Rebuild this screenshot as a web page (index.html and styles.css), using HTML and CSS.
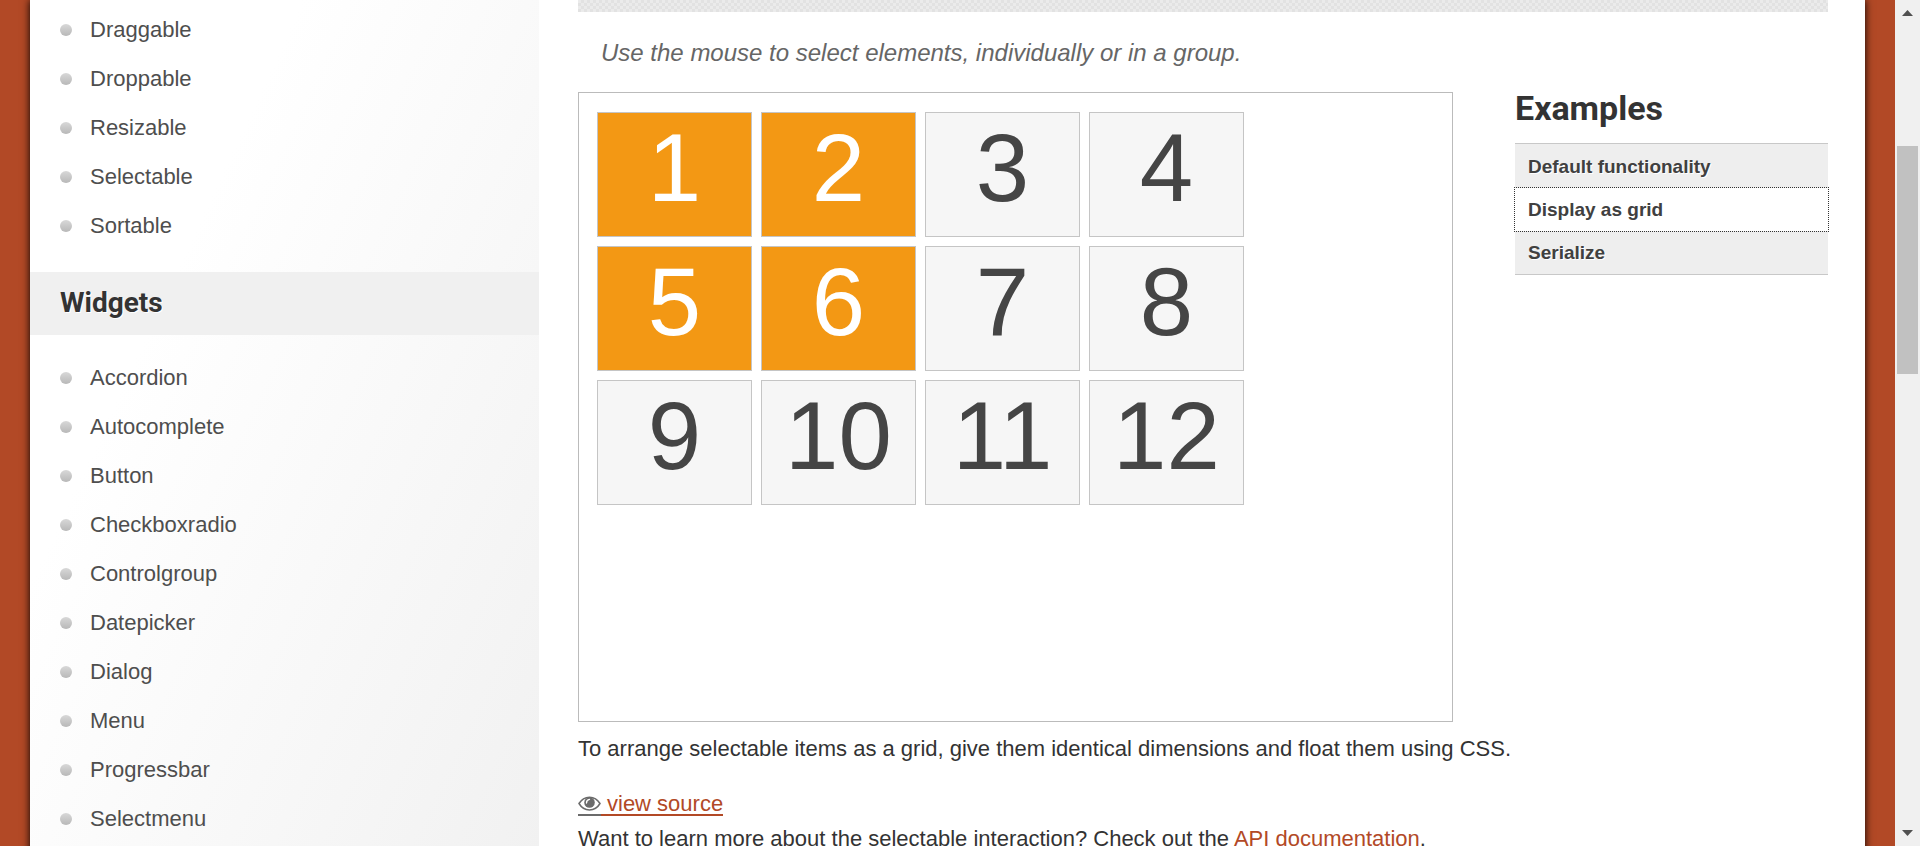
FILE: index.html
```
<!DOCTYPE html>
<html lang="en">
<head>
<meta charset="utf-8">
<title>Selectable - Display as grid</title>
<link rel="stylesheet" href="styles.css">
</head>
<body>
<div class="viewport">
  <div class="backdrop">
    <div class="page">
      <nav class="sidebar" aria-label="Demos">
        <ul class="nav-list">
          <li><a href="#draggable">Draggable</a></li>
          <li><a href="#droppable">Droppable</a></li>
          <li><a href="#resizable">Resizable</a></li>
          <li><a href="#selectable">Selectable</a></li>
          <li><a href="#sortable">Sortable</a></li>
        </ul>
        <h3 class="nav-title">Widgets</h3>
        <ul class="nav-list">
          <li><a href="#accordion">Accordion</a></li>
          <li><a href="#autocomplete">Autocomplete</a></li>
          <li><a href="#button">Button</a></li>
          <li><a href="#checkboxradio">Checkboxradio</a></li>
          <li><a href="#controlgroup">Controlgroup</a></li>
          <li><a href="#datepicker">Datepicker</a></li>
          <li><a href="#dialog">Dialog</a></li>
          <li><a href="#menu">Menu</a></li>
          <li><a href="#progressbar">Progressbar</a></li>
          <li><a href="#selectmenu">Selectmenu</a></li>
        </ul>
      </nav>
      <main class="content">
        <div class="rule"></div>
        <p class="intro">Use the mouse to select elements, individually or in a group.</p>
        <div class="columns">
          <section class="demo-frame">
            <ol class="selectable">
              <li class="cell selected">1</li>
              <li class="cell selected">2</li>
              <li class="cell">3</li>
              <li class="cell">4</li>
              <li class="cell selected">5</li>
              <li class="cell selected">6</li>
              <li class="cell">7</li>
              <li class="cell">8</li>
              <li class="cell">9</li>
              <li class="cell">10</li>
              <li class="cell">11</li>
              <li class="cell">12</li>
            </ol>
          </section>
          <aside class="examples">
            <h2 class="examples-title">Examples</h2>
            <ul class="examples-list">
              <li><a href="#default">Default functionality</a></li>
              <li><a class="active" href="#grid">Display as grid</a></li>
              <li><a href="#serialize">Serialize</a></li>
            </ul>
          </aside>
        </div>
        <p class="description">To arrange selectable items as a grid, give them identical dimensions and float them using CSS.</p>
        <div class="source">
          <a class="view-source" href="#source"><span class="eye"><svg width="23" height="15" viewBox="0 0 23 15" aria-hidden="true"><path d="M1 7.500C6-1 17-1 22 7.500C17 16 6 16 1 7.500Z" fill="#fff" stroke="#6b6b6b" stroke-width="1.500"/><circle cx="11.500" cy="6.500" r="5.300" fill="#6b6b6b"/><path d="M8.500 7C8.500 4.800 9.700 3.500 11.500 3.300" fill="none" stroke="#fff" stroke-width="1.300" stroke-linecap="round"/></svg></span><span class="view-label">view source</span></a>
        </div>
        <p class="more">Want to learn more about the selectable interaction? Check out the <a href="#api">API documentation</a>.</p>
      </main>
    </div>
  </div>
  <div class="scrollbar" aria-hidden="true">
    <svg class="arrow" width="11" height="6" viewBox="0 0 11 6"><path d="M0 6L5.500 0L11 6Z" fill="#505050"/></svg>
    <div class="track"><div class="thumb"></div></div>
    <svg class="arrow" width="11" height="6" viewBox="0 0 11 6"><path d="M0 0L5.500 6L11 0Z" fill="#505050"/></svg>
  </div>
</div>
</body>
</html>
```

FILE: styles.css
```
* { box-sizing: border-box; }
body {
  margin: 0;
  color: #333;
  font: 22px/33px "Liberation Sans", Arial, sans-serif;
}
ul, ol, p, h2, h3 { margin: 0; padding: 0; }
ul, ol { list-style: none; }
a { color: #b24926; text-decoration: none; }

.viewport { display: flex; height: 100vh; overflow: hidden; }
.backdrop { flex: 1; min-width: 0; padding: 0 30px; background: #b24926; overflow: hidden; }
.page {
  display: flex;
  min-height: 100%;
  background: #fff;
  box-shadow: 0 0 8px #000;
}

.sidebar {
  flex: 0 0 509px;
  padding-top: 5px;
  background: linear-gradient(115deg, #fff 30%, #f1f1f1 100%);
}
.nav-list { padding-left: 30px; }
.nav-list li { display: flex; align-items: center; gap: 18px; line-height: 49px; }
.nav-list li::before {
  content: "";
  width: 12px;
  height: 12px;
  border-radius: 50%;
  background: linear-gradient(#d8d8d8, #b8b8b8);
}
.nav-list a { color: #4e4e4e; }
.nav-title {
  margin: 22px 0 18px;
  padding: 0 30px 2px;
  background: #f0f0f0;
  color: #333;
  font: bold 28px/61px Roboto, sans-serif;
  text-shadow: 1px 1px 0 #fff;
}

.content { flex: 1; min-width: 0; padding: 0 37px 0 39px; }
.rule {
  height: 12px;
  background: repeating-conic-gradient(#e2e2e2 0 25%, #ebebeb 0 50%) 0 0 / 6px 6px;
}
.intro { padding: 24px 23px 23px; color: #666; font-size: 24px; font-style: italic; }
.columns { display: flex; align-items: flex-start; justify-content: space-between; }
.demo-frame { flex: 0 0 70%; height: 630px; padding: 19px 18px; border: 1px solid #bbb; }
.selectable { display: grid; grid-template-columns: repeat(4, 155px); gap: 9px; }
.cell {
  height: 125px;
  border: 1px solid #c5c5c5;
  background: #f6f6f6;
  color: #454545;
  font-size: 96px;
  line-height: 110px;
  text-align: center;
}
.selected { background: #f39814; color: #fff; }

.examples { flex: 0 0 313px; }
.examples-title { padding-bottom: 19px; font: bold 34px/32px Roboto, sans-serif; }
.examples-list { padding-top: 1px; border-top: 1px solid #c8c8c8; border-bottom: 1px solid #c8c8c8; background: #eee; }
.examples-list a {
  display: block;
  padding-left: 13px;
  background: #eee;
  color: #404040;
  font-size: 19px;
  font-weight: bold;
  line-height: 43px;
  text-shadow: 1px 1px 0 #fff;
}
.examples-list .active { background: #fff; outline: 1px dotted #333; }

.description { padding-top: 10px; }
.source { display: flex; padding-top: 22px; }
.view-source { display: flex; }
.eye, .view-label { height: 29px; border-bottom: 2px solid; }
.eye { display: flex; align-items: center; padding-top: 6px; color: #6b6b6b; }
.view-label { padding-left: 6px; }
.more { padding-top: 6px; }

.scrollbar {
  display: flex;
  flex-direction: column;
  align-items: center;
  flex: 0 0 25px;
  padding: 10px 2px;
  background: #f0f0f0;
}
.track { flex: 1; width: 100%; padding-top: 130px; }
.thumb { height: 228px; background: #c1c1c1; }
```
